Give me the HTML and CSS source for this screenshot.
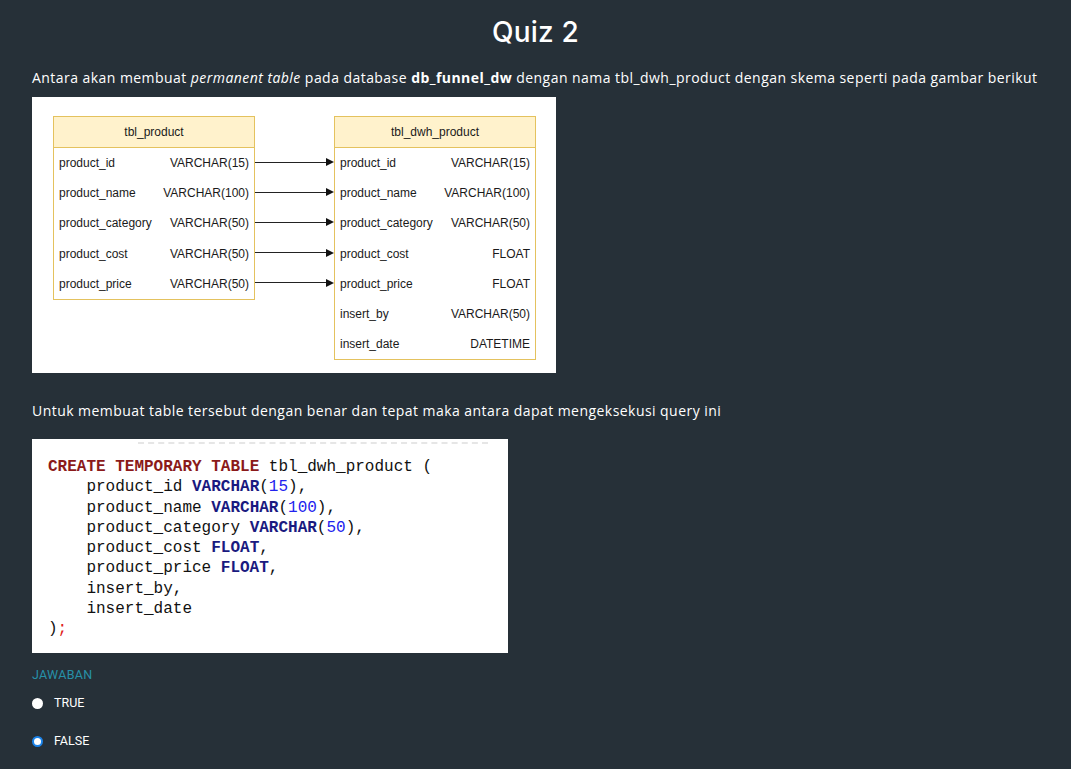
FILE: index.html
```html
<!DOCTYPE html>
<html>
<head>
<meta charset="utf-8">
<link rel="stylesheet" href="styles.css">
</head>
<body>
<div class="page">
  <h1 class="title">Quiz 2</h1>
  <p class="text">Antara akan membuat <em>permanent table</em> pada database <b>db_funnel_dw</b> dengan nama tbl_dwh_product dengan skema seperti pada gambar berikut</p>
  <div class="diagram">
    <div class="erd">
      <div class="tbl">
        <div class="thead">tbl_product</div>
        <div class="row"><span>product_id</span><span>VARCHAR(15)</span></div>
        <div class="row"><span>product_name</span><span>VARCHAR(100)</span></div>
        <div class="row"><span>product_category</span><span>VARCHAR(50)</span></div>
        <div class="row"><span>product_cost</span><span>VARCHAR(50)</span></div>
        <div class="row"><span>product_price</span><span>VARCHAR(50)</span></div>
      </div>
      <div class="links">
        <div class="arrow"></div>
        <div class="arrow"></div>
        <div class="arrow"></div>
        <div class="arrow"></div>
        <div class="arrow"></div>
      </div>
      <div class="tbl">
        <div class="thead">tbl_dwh_product</div>
        <div class="row"><span>product_id</span><span>VARCHAR(15)</span></div>
        <div class="row"><span>product_name</span><span>VARCHAR(100)</span></div>
        <div class="row"><span>product_category</span><span>VARCHAR(50)</span></div>
        <div class="row"><span>product_cost</span><span>FLOAT</span></div>
        <div class="row"><span>product_price</span><span>FLOAT</span></div>
        <div class="row"><span>insert_by</span><span>VARCHAR(50)</span></div>
        <div class="row"><span>insert_date</span><span>DATETIME</span></div>
      </div>
    </div>
  </div>
  <p class="text second">Untuk membuat table tersebut dengan benar dan tepat maka antara dapat mengeksekusi query ini</p>
  <div class="code">
    <div class="clip"></div>
    <div class="lines">
      <div class="ln"><span class="kw">CREATE TEMPORARY TABLE</span> tbl_dwh_product (</div>
      <div class="ln ind">product_id <span class="ty">VARCHAR</span>(<span class="num">15</span>),</div>
      <div class="ln ind">product_name <span class="ty">VARCHAR</span>(<span class="num">100</span>),</div>
      <div class="ln ind">product_category <span class="ty">VARCHAR</span>(<span class="num">50</span>),</div>
      <div class="ln ind">product_cost <span class="ty">FLOAT</span>,</div>
      <div class="ln ind">product_price <span class="ty">FLOAT</span>,</div>
      <div class="ln ind">insert_by,</div>
      <div class="ln ind">insert_date</div>
      <div class="ln">)<span class="semi">;</span></div>
    </div>
  </div>
  <div class="answer">
    <div class="label">JAWABAN</div>
    <label class="opt"><span class="radio"></span>TRUE</label>
    <label class="opt"><span class="radio checked"></span>FALSE</label>
  </div>
</div>
</body>
</html>
```
FILE: styles.css
```css
html, body {
  margin: 0;
  padding: 0;
  background: #263038;
}
body {
  font-family: "Open Sans", "Noto Sans", sans-serif;
  color: #ffffff;
}
.page {
  padding: 0 32px;
  height: 769px;
  overflow: hidden;
  box-sizing: border-box;
}
.title {
  margin: 0;
  padding-top: 14px;
  text-align: center;
  font-weight: 500;
  font-size: 28px;
  line-height: 36px;
  font-family: "Inter", "Open Sans", sans-serif;
  letter-spacing: 0.2px;
}
.text {
  margin: 19px 0 0;
  font-size: 14px;
  line-height: 18px;
  letter-spacing: 0.45px;
  white-space: nowrap;
}
.text em { font-style: italic; }
.text b { font-weight: 700; }
.diagram {
  margin-top: 10px;
  width: 524px;
  height: 276px;
  background: #fff;
  box-sizing: border-box;
  padding: 19px 0 0 21px;
}
.erd {
  display: flex;
  align-items: flex-start;
  font-family: "Liberation Sans", Arial, sans-serif;
  font-size: 12px;
  color: #1a1a1a;
}
.tbl {
  width: 202px;
  border: 1px solid #e4c25e;
  box-sizing: border-box;
  background: #fff;
}
.thead {
  height: 30px;
  line-height: 30px;
  text-align: center;
  background: #fff2cc;
  border-bottom: 1px solid #e4c25e;
}
.row {
  height: 30.2px;
  display: flex;
  justify-content: space-between;
  align-items: center;
  padding: 0 5px 0 5px;
}
.links {
  width: 79px;
  padding-top: 31px;
}
.arrow {
  height: 30.2px;
  position: relative;
}
.arrow::before {
  content: "";
  position: absolute;
  left: 0;
  right: 6px;
  top: 14.5px;
  border-top: 1px solid #222;
}
.arrow::after {
  content: "";
  position: absolute;
  right: 0;
  top: 11px;
  border-left: 8px solid #111;
  border-top: 4px solid transparent;
  border-bottom: 4px solid transparent;
}
.second {
  margin-top: 29px;
}
.code {
  margin-top: 19px;
  width: 476px;
  height: 214px;
  background: #fff;
  box-sizing: border-box;
  padding: 0 0 0 16px;
  overflow: hidden;
}
.clip {
  height: 3px;
  margin: 0 20px 0 90px;
  border-bottom: 2px dashed #e6e6e6;
}
.lines {
  margin-top: 15px;
  font-family: "Liberation Mono", "DejaVu Sans Mono", monospace;
  font-size: 16px;
  color: #111;
}
.ln {
  height: 20.3px;
  line-height: 17px;
  white-space: pre;
}
.ind { padding-left: 38.4px; }
.kw { color: #8b1a1a; font-weight: 700; }
.ty { color: #1a1a80; font-weight: 700; }
.num { color: #2222ee; }
.semi { color: #e02020; }
.answer {
  margin-top: 14px;
  font-family: "Roboto", sans-serif;
}
.label {
  color: #2791a8;
  font-size: 12.5px;
  line-height: 16px;
  letter-spacing: 0.3px;
}
.opt {
  display: flex;
  align-items: center;
  font-size: 12.5px;
  line-height: 16px;
  margin-top: 12px;
  height: 16px;
  color: #fff;
}
.opt + .opt { margin-top: 22px; }
.radio {
  width: 11px;
  height: 11px;
  border-radius: 50%;
  background: #fff;
  margin: 0 11px 0 0;
  box-sizing: border-box;
}
.radio.checked {
  border: 2.5px solid #1a82e8;
  background: #fff;
}
```
